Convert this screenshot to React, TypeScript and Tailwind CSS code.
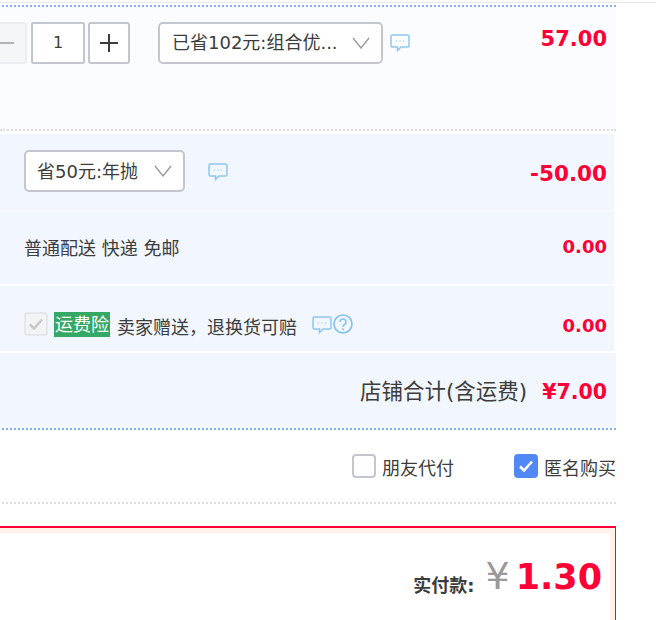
import React from 'react';

const Bubble = ({ className = '' }: { className?: string }) => (
  <svg className={className} width="20" height="18" viewBox="0 0 20 18" fill="none">
    <path d="M2.5 1h15a1.5 1.5 0 0 1 1.5 1.5v9a1.5 1.5 0 0 1-1.5 1.5H11l-3.5 3.5V13H2.5A1.5 1.5 0 0 1 1 11.5v-9A1.5 1.5 0 0 1 2.5 1z" stroke="#8fc7f0" strokeWidth="1.5" />
    <circle cx="6.5" cy="7" r="0.8" fill="#a9d4f3" />
    <circle cx="10" cy="7" r="0.8" fill="#a9d4f3" />
    <circle cx="13.5" cy="7" r="0.8" fill="#a9d4f3" />
  </svg>
);

const Chevron = () => (
  <svg width="18" height="12" viewBox="0 0 18 12" fill="none">
    <path d="M1 1l8 10 8-10" stroke="#9a9a9a" strokeWidth="1.4" />
  </svg>
);

const Check = ({ color }: { color: string }) => (
  <svg width="14" height="12" viewBox="0 0 14 12" fill="none">
    <path d="M1 6.5l4 4L13 1.5" stroke={color} strokeWidth="2.6" />
  </svg>
);

const Price = ({ children, className = '' }: { children: React.ReactNode; className?: string }) => (
  <span className={`font-bold text-[#ff0036] ${className}`}>{children}</span>
);

export default function App() {
  return (
    <div className="h-[620px] w-[656px] overflow-hidden bg-white font-['DejaVu_Sans','Noto_Sans_CJK_SC',sans-serif] text-[18px] leading-[24px] text-[#3c3c3c]">
      <div className="mt-[2px] h-px bg-[#e8e8e8]" />
      <div className="w-[616px] pt-[2px]">
        <div className="ml-[2px] border-t-2 border-dotted border-[#7fb0fb]" />
        <div className="flex h-[122px] items-start bg-[#fbfcff] pt-[15px] pr-[9px]">
          <div className="-ml-[15px] flex h-[42px] w-[42px] items-center justify-center rounded-[3px] border-2 border-[#ebedf0] bg-[#f5f6f7]">
            <div className="h-[2px] w-[16px] bg-[#b4b4b4]" />
          </div>
          <div className="ml-[4px] flex h-[42px] w-[54px] items-center justify-center rounded-[2px] border-2 border-[#c3c5cf] bg-white text-[16px]">
            1
          </div>
          <div className="ml-[3px] flex h-[42px] w-[42px] items-center justify-center rounded-[3px] border-2 border-[#c3c5cf] bg-white">
            <svg width="18" height="18" viewBox="0 0 18 18">
              <path d="M9 0v18M0 9h18" stroke="#3c3c3c" strokeWidth="2" />
            </svg>
          </div>
          <div className="ml-[28px] flex h-[42px] w-[225px] items-center justify-between rounded-[5px] border-2 border-[#c3c5cf] bg-white pr-[11px] pl-[12px]">
            <span className="whitespace-nowrap">已省102元:组合优...</span>
            <Chevron />
          </div>
          <Bubble className="mt-[12px] ml-[7px]" />
          <Price className="ml-auto pt-[2px] text-[21px] leading-[30px]">57.00</Price>
        </div>
        <div className="border-t-2 border-dotted border-[#dcdcdc]" />
        <div className="mt-[3px] flex h-[76px] w-[614px] items-center bg-[#f1f6ff] pr-[7px] pl-[24px]">
          <div className="-mt-[3px] flex h-[42px] w-[161px] items-center justify-between rounded-[5px] border-2 border-[#c3c5cf] bg-white px-[11px]">
            <span className="whitespace-nowrap pt-[2px]">省50元:年抛</span>
            <Chevron />
          </div>
          <Bubble className="ml-[23px]" />
          <Price className="ml-auto pt-[4px] text-[21.5px]">-50.00</Price>
        </div>
        <div className="mt-px flex h-[73px] w-[614px] items-center bg-[#f1f6ff] pr-[7px] pl-[24px]">
          <span className="pt-[2px]">普通配送 快递 免邮</span>
          <Price className="ml-auto pb-[2px] text-[18px]">0.00</Price>
        </div>
        <div className="mt-[2px] flex h-[65px] w-[614px] items-start bg-[#f1f6ff] pt-[26px] pr-[7px] pl-[24px]">
          <div className="flex h-[24px] w-[24px] items-center justify-center rounded-[4px] border-2 border-[#e6e7ea] bg-[#f2f3f5]">
            <Check color="#c8c8c8" />
          </div>
          <span className="ml-[6px] h-[25px] bg-[#34a864] px-px leading-[26px] text-white">运费险</span>
          <span className="ml-[7px] pt-[4px]">卖家赠送，退换货可赔</span>
          <Bubble className="mt-[4px] ml-[15px]" />
          <svg className="mt-[2px] ml-px" width="20" height="20" viewBox="0 0 20 20" fill="none">
            <circle cx="10" cy="10" r="9" stroke="#7fc0ef" strokeWidth="1.6" />
            <path d="M7 8a3 3 0 1 1 4.5 2.6c-1 .6-1.5 1.1-1.5 2.2" stroke="#7fc0ef" strokeWidth="1.6" />
            <circle cx="10" cy="15.3" r="1" fill="#7fc0ef" />
          </svg>
          <Price className="ml-auto pt-[2px] text-[18px]">0.00</Price>
        </div>
        <div className="mt-[2px] flex h-[75px] items-center justify-end bg-[#f1f6ff] pt-[2px] pr-[9px]">
          <span className="text-[21.5px]">店铺合计(含运费)</span>
          <Price className="ml-[15px] text-[20.5px]">¥7.00</Price>
        </div>
        <div className="ml-[2px] border-t-2 border-dotted border-[#7fb0fb]" />
        <div className="flex h-[72px] items-center justify-end">
          <div className="flex h-[24px] w-[24px] rounded-[4px] border-2 border-[#c3c5cf] bg-white" />
          <span className="mt-[6px] ml-[6px]">朋友代付</span>
          <div className="ml-[60px] flex h-[24px] w-[24px] items-center justify-center rounded-[4px] bg-[#5287f8]">
            <Check color="#ffffff" />
          </div>
          <span className="mt-[6px] ml-[6px]">匿名购买</span>
        </div>
        <div className="ml-[2px] border-t-2 border-dotted border-[#dcdcdc]" />
        <div className="mt-[22px] -ml-[10px] h-[120px] w-[626px] border border-t-2 border-[#ff0036]">
          <div className="flex h-full items-start justify-end border-[5px] border-[#fff0e8] bg-white pt-[20px] pr-[8px]">
            <span className="mt-[21px] text-[18px] font-bold">实付款:</span>
            <span className="mt-px ml-[11px] text-[38px] leading-[44px] text-[#999]">¥</span>
            <Price className="mt-[2px] ml-[6px] text-[35px] leading-[44px]">1.30</Price>
          </div>
        </div>
      </div>
    </div>
  );
}
